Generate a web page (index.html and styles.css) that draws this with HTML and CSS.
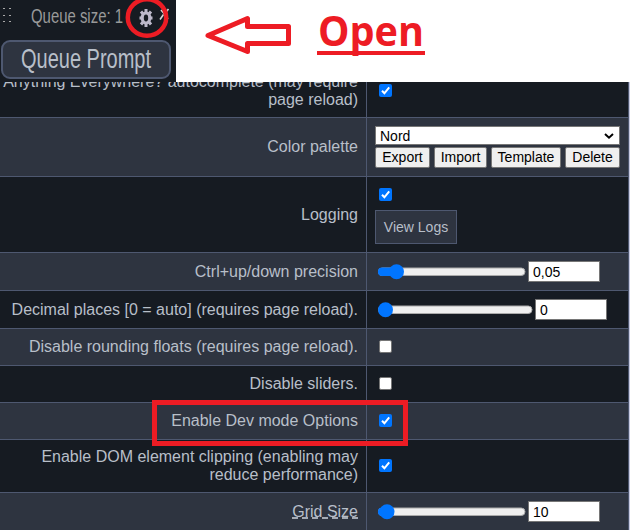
FILE: index.html
```html
<!DOCTYPE html>
<html lang="en">
<head>
<meta charset="utf-8">
<title>Settings</title>
<link rel="stylesheet" href="styles.css">
</head>
<body>
<main class="page">
  <header class="top">
    <section class="queue">
      <div class="queue-bar">
        <svg class="grip" width="12" height="20" viewBox="0 0 12 20"><path d="M0 1.500h2M6 1.500h2M0 8.500h2M6 8.500h2M0 14.500h2M6 14.500h2" stroke="#a9a9a9" stroke-width="1"/></svg>
        <svg class="queue-size" width="96" height="26"><text x="0" y="16" textLength="92" lengthAdjust="spacingAndGlyphs">Queue size: 1</text></svg>
      </div>
      <div class="queue-button"><svg width="134" height="34"><text x="0" y="25" textLength="130" lengthAdjust="spacingAndGlyphs">Queue Prompt</text></svg></div>
      <svg class="gear" width="56" height="40" viewBox="0 0 56 40">
        <g fill="none" stroke="#bdb9cb"><ellipse cx="26" cy="18" rx="3.800" ry="5" stroke-width="3.200"/><path stroke-width="3" d="M26 9v4M26 23v4M19.500 18h3M29.500 18h3M21 11.500l2.500 3M31 11.500l-2.500 3M21 24.500l2.500-3M31 24.500l-2.500-3"/></g>
        <path d="M41 10l3.500 4 4-5M43.500 14.500l-3.500 5M45 15l3 4" fill="none" stroke="#d8d8d8" stroke-width="1.600"/>
        <ellipse cx="27" cy="17.500" rx="19.200" ry="18.200" fill="none" stroke="#ed1c24" stroke-width="4.500"/>
      </svg>
    </section>
    <section class="callout">
      <svg class="arrow" width="88" height="42" viewBox="0 0 88 42"><path d="M4 20.500L43.500 3.500v8h41v17h-41v8z" fill="none" stroke="#ed1c24" stroke-width="5" stroke-linejoin="round"/></svg>
      <svg class="open" width="110" height="52"><text x="1" y="40" textLength="106" lengthAdjust="spacingAndGlyphs">Open</text><rect y="45" width="108" height="4"/></svg>
    </section>
  </header>
  <section class="settings">
    <div class="row r1"><div class="label"><span>Anything Everywhere? autocomplete (may require<br>page reload)</span></div><div class="value"><i class="check on"><svg viewBox="0 0 13 13"><path d="M3 6.800l2.400 2.500L10.200 3.300"/></svg></i></div></div>
    <div class="row r2"><div class="label"><span>Color palette</span></div><div class="value"><div class="palette"><div class="select"><span>Nord</span><svg width="10" height="6" viewBox="0 0 10 6"><path d="M1 1l4 3.700L9 1" fill="none" stroke="#000" stroke-width="2"/></svg></div><div class="buttons"><b class="export">Export</b><b class="import">Import</b><b class="template">Template</b><b class="delete">Delete</b></div></div></div></div>
    <div class="row r3"><div class="label"><span>Logging</span></div><div class="value stack"><i class="check on"><svg viewBox="0 0 13 13"><path d="M3 6.800l2.400 2.500L10.200 3.300"/></svg></i><div class="logs">View Logs</div></div></div>
    <div class="row r4"><div class="label"><span>Ctrl+up/down precision</span></div><div class="value"><svg class="slider" width="148" height="16" viewBox="0 0 148 16"><rect x=".5" y="4" width="146.500" height="7.500" rx="3.700" fill="#efefef" stroke="#aaa"/><rect y="3.500" width="20" height="8.500" rx="4" fill="#0075ff"/><circle cx="18.500" cy="7.700" r="7.500" fill="#0075ff"/></svg><span class="number">0,05</span></div></div>
    <div class="row r5"><div class="label"><span>Decimal places [0 = auto] (requires page reload).</span></div><div class="value"><svg class="slider" width="155" height="16" viewBox="0 0 155 16"><rect x=".5" y="4" width="153.500" height="7.500" rx="3.700" fill="#efefef" stroke="#aaa"/><circle cx="7.500" cy="7.700" r="7.500" fill="#0075ff"/></svg><span class="number">0</span></div></div>
    <div class="row r6"><div class="label"><span>Disable rounding floats (requires page reload).</span></div><div class="value"><i class="check"></i></div></div>
    <div class="row r7"><div class="label"><span>Disable sliders.</span></div><div class="value"><i class="check"></i></div></div>
    <div class="row r8"><div class="label"><span>Enable Dev mode Options</span></div><div class="value"><i class="check on"><svg viewBox="0 0 13 13"><path d="M3 6.800l2.400 2.500L10.200 3.300"/></svg></i></div><div class="highlight"></div></div>
    <div class="row r9"><div class="label"><span>Enable DOM element clipping (enabling may<br>reduce performance)</span></div><div class="value"><i class="check on"><svg viewBox="0 0 13 13"><path d="M3 6.800l2.400 2.500L10.200 3.300"/></svg></i></div></div>
    <div class="row r10"><div class="label"><span class="hint">Grid Size</span></div><div class="value"><svg class="slider" width="148" height="16" viewBox="0 0 148 16"><rect x=".5" y="4" width="146.500" height="7.500" rx="3.700" fill="#efefef" stroke="#aaa"/><rect y="3.500" width="12" height="8.500" rx="4" fill="#0075ff"/><circle cx="9" cy="7.700" r="7.500" fill="#0075ff"/></svg><span class="number">10</span></div></div>
  </section>
</main>
</body>
</html>
```
FILE: styles.css
```css
* { box-sizing: border-box; }
body { margin: 0; background: #161b22; }
.page { width: 630px; height: 530px; overflow: hidden; background: #c5c8e0; font: 16px/18px "Liberation Sans", Arial, sans-serif; color: #b8bfc9; }
.top { display: flex; height: 82px; background: #fff; }
.queue { position: relative; width: 176px; height: 82px; background: #161b22; }
.queue-bar { display: flex; height: 40px; padding: 7px 0 0 3px; }
.queue-size { margin-left: 16px; font-size: 20.5px; fill: #999; }
.queue-button { width: 170px; height: 39px; margin-left: 1px; padding: 1px 0 0 18px; border: 2px solid #4e5870; border-radius: 9px; background: #2e3440; font-size: 27.5px; fill: #b8bfc9; }
svg { display: block; flex: none; overflow: visible; }
.gear { position: absolute; left: 120px; top: 0; overflow: hidden; }
.callout { display: flex; flex: 1; padding-left: 28px; }
.arrow { margin-top: 15px; }
.open { margin: 6px 0 0 25px; fill: #ed1c24; font: bold 41px "Open Sans", sans-serif; }
.settings { width: 629px; border-right: 1px solid #4e5870; }
.row { position: relative; display: grid; grid-template-columns: 367px 1fr; border-bottom: 1px solid #4e5870; background: #161b22; }
.row:nth-child(even) { background: #2e3440; }
.label { display: flex; align-items: center; justify-content: flex-end; padding-right: 8px; border-right: 1px solid #4e5870; text-align: right; white-space: nowrap; min-height: 0; }
.value { display: flex; align-items: center; padding-left: 8px; min-height: 0; }
.r1 { height: 36px; overflow: hidden; }
.r1 .label { align-items: flex-end; padding-bottom: 8px; }
.r1 .value { align-items: flex-start; padding-top: 2px; }
.r2 { height: 59px; }
.r3 { height: 76px; }
.r4, .r5 { height: 38px; }
.r6, .r7, .r8 { height: 37px; }
.r9 { height: 53px; }
.r10 { height: 38px; }
.r6 .value, .r7 .value, .r8 .value, .r9 .value { padding-bottom: 2px; }
.check { width: 13px; height: 13px; margin-left: 4px; border: 1px solid #767676; border-radius: 2px; background: #fff; }
.check.on { border: 0; background: #0075ff; }
.check path { fill: none; stroke: #fff; stroke-width: 2; }
.palette { width: 245px; color: #000; font-size: 14px; }
.select { display: flex; align-items: center; justify-content: space-between; height: 19px; padding: 0 5px 0 4px; border: 1px solid #767676; background: #fff; }
.buttons { display: flex; gap: 4px; margin-top: 2px; }
.buttons b { height: 21px; border: 1px solid #767676; border-radius: 2px; background: #efefef; font-weight: normal; line-height: 19px; text-align: center; }
.export { width: 55px; }
.import { width: 53px; }
.template { width: 70px; }
.delete { width: 55px; }
.value.stack { flex-direction: column; align-items: flex-start; justify-content: flex-start; padding-top: 11px; }
.logs { width: 82px; height: 34px; margin-top: 9px; border: 1px solid #4e5870; background: #2e3440; font-size: 14px; line-height: 32px; text-align: center; }
.slider { margin-left: 3px; }
.number { width: 72px; height: 21px; margin-left: 2px; padding-left: 4px; border: 1px solid #767676; background: #fff; color: #000; font-size: 14px; line-height: 20px; }
.hint { text-decoration: underline dashed #a5abb5 2px; text-underline-offset: 1px; text-decoration-skip-ink: none; }
.highlight { position: absolute; left: 152px; top: -3px; width: 256px; height: 46px; border: 5px solid #ed1c24; z-index: 1; }
```
